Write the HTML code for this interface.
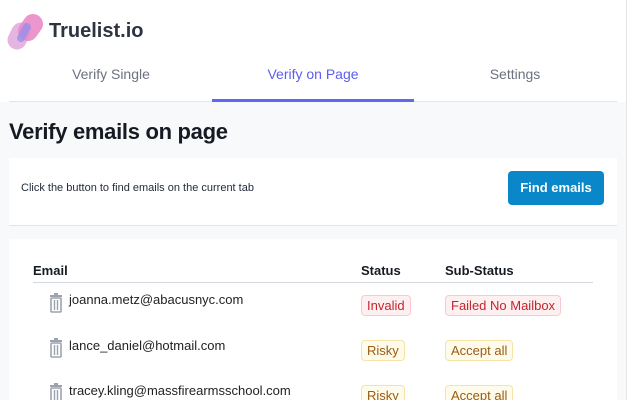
<!DOCTYPE html>
<html style="overflow:hidden"><head><style>
*{margin:0;padding:0;box-sizing:border-box}
html,body{width:640px;height:400px;overflow:hidden}
body{background:#f8f9fb;font-family:"Liberation Sans",sans-serif;position:relative}
.top{position:absolute;left:0;top:0;width:626px;height:102px;background:#fff}
.sb{position:absolute;left:626px;top:0;width:14px;height:400px;background:#fff;border-left:1px solid #e5e5e5}
.logo{position:absolute;left:5px;top:12px}
.brand{position:absolute;left:49px;top:20px;font-size:20px;font-weight:bold;color:#2d3340}
.tab{position:absolute;top:66px;font-size:14px;color:#6b7280;width:202px;text-align:center}
.line{position:absolute;left:9px;top:101px;width:608px;height:1px;background:#e3e4e8}
.act{position:absolute;left:212px;top:99px;width:202px;height:3px;background:#6366f1}
h1{position:absolute;left:9px;top:119px;font-size:22px;color:#151a23;font-weight:bold;letter-spacing:-0.3px}
.c1{position:absolute;left:9px;top:158px;width:608px;height:68px;background:#fff;border-bottom:1px solid #e3e4e8}
.c1 p{position:absolute;left:12px;top:24px;font-size:11px;color:#1f2937}
.btn{position:absolute;left:499px;top:13px;width:96px;height:34px;background:#0a87c9;border-radius:4px;color:#fff;font-weight:bold;font-size:13px;text-align:center;line-height:34px}
.c2{position:absolute;left:9px;top:239px;width:608px;height:161px;background:#fff;overflow:hidden}
.th{position:absolute;top:24px;font-size:13px;font-weight:bold;color:#151a23}
.hl{position:absolute;left:24px;top:43px;width:560px;height:1px;background:#d5d7e0}
.em{position:absolute;left:60px;font-size:13px;color:#222}
.tr{position:absolute;left:40px}
.bd{position:absolute;height:21px;border-radius:4px;font-size:13px;line-height:19px;padding:0 5px;border:1px solid}
.r{background:#fef0f1;border-color:#f9c9cd;color:#c0262d}
.y{background:#fffbea;border-color:#f6e3a6;color:#9a5b12}
</style></head><body>
<div class="top"></div>
<div class="sb"></div>
<svg class="logo" width="40" height="40" viewBox="0 0 40 40"><path d="M16 20L12 28" stroke="#e6b4e0" stroke-width="19" stroke-linecap="round"/><path d="M28 12L23 19" stroke="#e98cc8" stroke-width="20" stroke-linecap="round" opacity=".9"/><path d="M22 15L16 26" stroke="#8c8ff0" stroke-width="8" stroke-linecap="round" opacity=".7"/></svg>
<div class="brand">Truelist.io</div>
<div class="tab" style="left:10px">Verify Single</div>
<div class="tab" style="left:212px;color:#5b5ef0">Verify on Page</div>
<div class="tab" style="left:414px">Settings</div>
<div class="line"></div><div class="act"></div>
<h1>Verify emails on page</h1>
<div class="c1"><p>Click the button to find emails on the current tab</p><div class="btn">Find emails</div></div>
<div class="c2">
<div class="th" style="left:24px">Email</div><div class="th" style="left:352px">Status</div><div class="th" style="left:436px">Sub-Status</div>
<div class="hl"></div>
<svg class="tr" style="top:54px" width="14" height="20" viewBox="0 0 14 20"><path d="M1 3h12M5 1h4" stroke="#9ca3af" stroke-width="2"/><rect x="2" y="5" width="10" height="14" rx="1" fill="none" stroke="#9ca3af" stroke-width="1.6"/><path d="M5.5 7v10M8.5 7v10" stroke="#9ca3af" stroke-width="1.4"/></svg>
<div class="em" style="top:53px">joanna.metz@abacusnyc.com</div>
<div class="bd r" style="left:352px;top:56px">Invalid</div><div class="bd r" style="left:436px;top:56px">Failed No Mailbox</div>
<svg class="tr" style="top:99px" width="14" height="20" viewBox="0 0 14 20"><path d="M1 3h12M5 1h4" stroke="#9ca3af" stroke-width="2"/><rect x="2" y="5" width="10" height="14" rx="1" fill="none" stroke="#9ca3af" stroke-width="1.6"/><path d="M5.5 7v10M8.5 7v10" stroke="#9ca3af" stroke-width="1.4"/></svg>
<div class="em" style="top:99px">lance_daniel@hotmail.com</div>
<div class="bd y" style="left:352px;top:101px">Risky</div><div class="bd y" style="left:436px;top:101px">Accept all</div>
<svg class="tr" style="top:144px" width="14" height="20" viewBox="0 0 14 20"><path d="M1 3h12M5 1h4" stroke="#9ca3af" stroke-width="2"/><rect x="2" y="5" width="10" height="14" rx="1" fill="none" stroke="#9ca3af" stroke-width="1.6"/><path d="M5.5 7v10M8.5 7v10" stroke="#9ca3af" stroke-width="1.4"/></svg>
<div class="em" style="top:144px">tracey.kling@massfirearmsschool.com</div>
<div class="bd y" style="left:352px;top:146px">Risky</div><div class="bd y" style="left:436px;top:146px">Accept all</div>
</div>
</body></html>
